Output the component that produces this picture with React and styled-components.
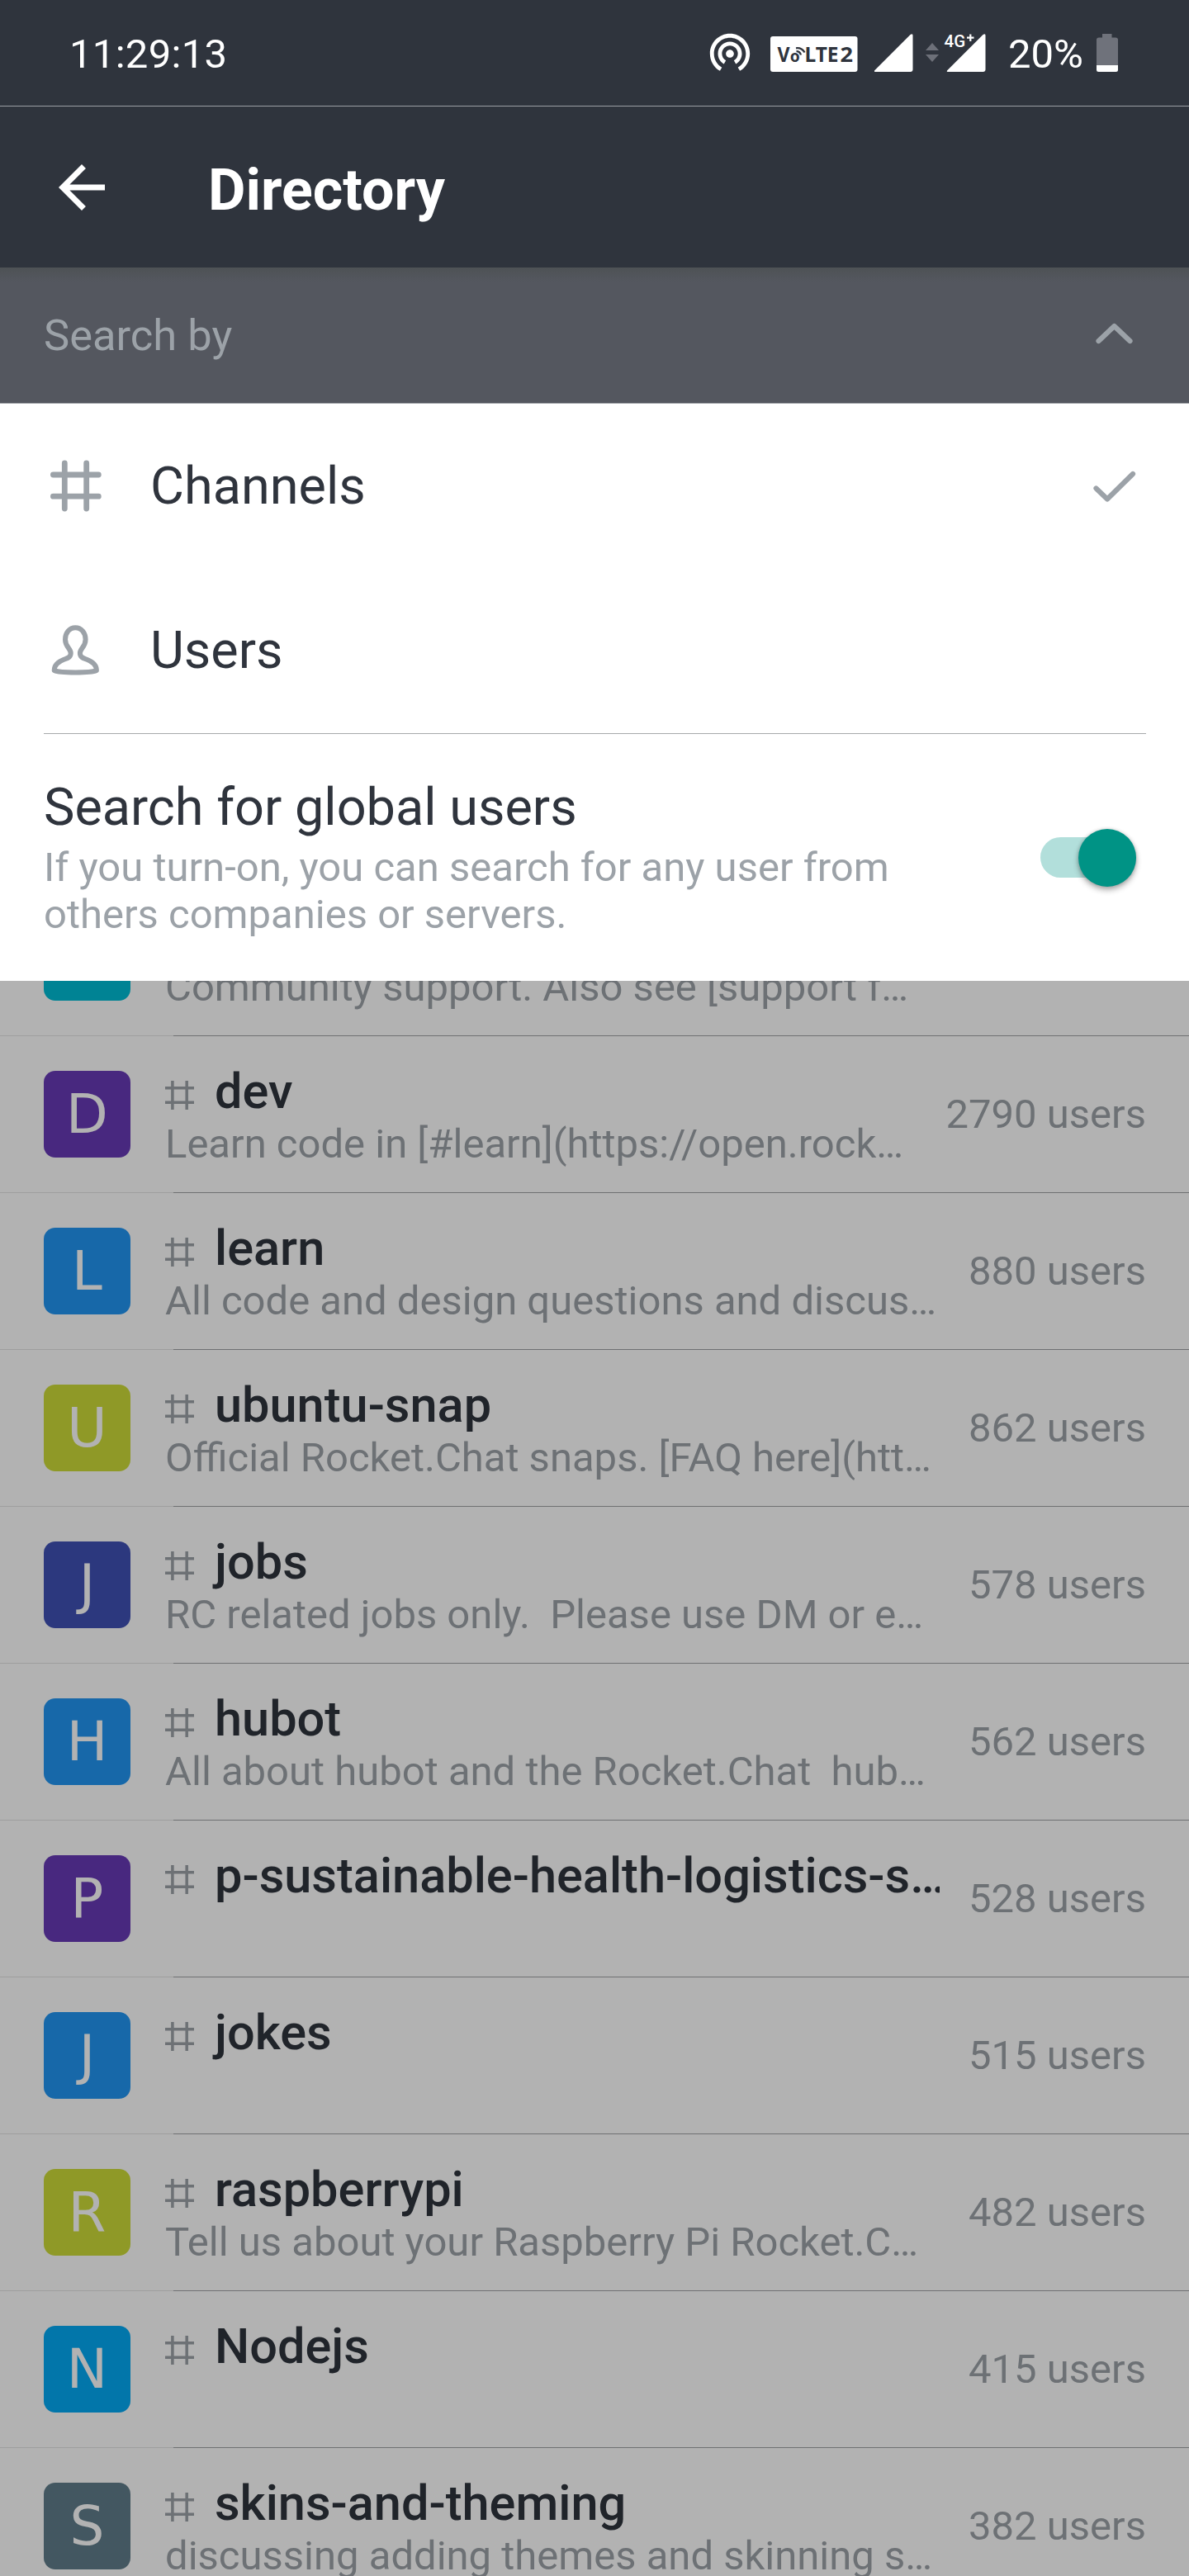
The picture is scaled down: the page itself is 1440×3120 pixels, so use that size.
import React from "react";
import styled, { createGlobalStyle } from "styled-components";

const GlobalStyle = createGlobalStyle`
  * { box-sizing: border-box; }
  body { margin: 0; background: #fff; }
`;

const Screen = styled.div`
  width: 1440px;
  height: 3120px;
  display: flex;
  flex-direction: column;
  overflow: hidden;
  background: #fff;
  font-family: Roboto, "Liberation Sans", sans-serif;
  color: #2f343d;
`;

const StatusBar = styled.div`
  flex: none;
  height: 129px;
  display: flex;
  align-items: center;
  padding: 0 86px 0 84px;
  background: #2f343d;
  border-bottom: 1px solid #9b9ea4;
  color: #fff;
  font-size: 49px;
  line-height: 58px;
`;

const Clock = styled.span`
  flex: 1;
  padding-top: 4px;
  letter-spacing: 0.3px;
`;

const StatusIcons = styled.div`
  display: flex;
  align-items: flex-start;
  height: 58px;
`;

const StatusGlyph = styled.svg`
  display: block;
  flex: none;
  margin-left: ${(p) => p.$gap || 0}px;
`;

const BatteryText = styled.span`
  width: 92px;
  margin: 2px 0 0 27px;
`;

const Header = styled.header`
  flex: none;
  height: 195px;
  display: flex;
  align-items: center;
  padding-left: 57px;
  background: #2f343d;
  color: #fff;
`;

const HeaderTitle = styled.h1`
  margin: 6px 0 0 111px;
  font-size: 70px;
  line-height: 82px;
  font-weight: 700;
`;

const SearchBar = styled.div`
  flex: none;
  height: 165px;
  display: flex;
  align-items: center;
  justify-content: space-between;
  padding: 0 52px 0 53px;
  background: linear-gradient(rgba(78, 82, 85, 1), rgba(84, 87, 95, 0) 17px), #54575f;
  border-bottom: 1px solid #a3a5a9;
  color: #9ca2a8;
  font-size: 52.5px;
  line-height: 62px;
`;

const Dropdown = styled.section`
  flex: none;
  height: 699px;
  background: #fff;
`;

const Option = styled.div`
  height: ${(p) => p.$height}px;
  display: flex;
  align-items: center;
  padding: 0 52px 0 53px;
`;

const OptionLabel = styled.span`
  flex: 1;
  margin-left: 52px;
  font-size: 63px;
  line-height: 74px;
`;

const Divider = styled.div`
  height: 1px;
  margin: 0 52px 0 53px;
  background: #a7a9ab;
`;

const GlobalSearch = styled.div`
  display: flex;
  align-items: center;
  justify-content: space-between;
  height: 299px;
  padding: 0 64px 0 53px;
`;

const GlobalTitle = styled.div`
  font-size: 63px;
  line-height: 74px;
`;

const GlobalHint = styled.div`
  margin-top: 7px;
  font-size: 49px;
  line-height: 57px;
  color: #9ca2a8;
`;

const SwitchTrack = styled.div`
  width: 116px;
  height: 49px;
  display: flex;
  align-items: center;
  justify-content: flex-end;
  border-radius: 25px;
  background: #b2dfdb;
`;

const SwitchThumb = styled.div`
  flex: none;
  width: 70px;
  height: 70px;
  border-radius: 50%;
  background: #009385;
  box-shadow: 0 4px 7px rgba(0, 0, 0, 0.32), 0 0 4px rgba(0, 0, 0, 0.16);
`;

const ListViewport = styled.main`
  flex: 1;
  min-height: 0;
  position: relative;
  overflow: hidden;
  &::after {
    content: "";
    position: absolute;
    inset: 0;
    background: rgba(0, 0, 0, 0.3);
  }
`;

const List = styled.ul`
  margin: -123px 0 0;
  padding: 0;
  list-style: none;
`;

const Row = styled.li`
  height: 190px;
  display: flex;
  align-items: center;
  padding: 0 52px 1px 53px;
  background: linear-gradient(to right, #e3e3e3 210px, #a0a1a4 210px) bottom / 100% 1px no-repeat;
`;

const Avatar = styled.div`
  flex: none;
  width: 105px;
  height: 105px;
  border-radius: 14px;
  background: ${(p) => p.$color};
  color: #fff;
  font-family: "DejaVu Sans", sans-serif;
  font-size: 66px;
  line-height: 106px;
  text-align: center;
`;

const RowText = styled.div`
  flex: 1;
  min-width: 0;
  height: 133px;
  margin: 7px 35px 0 42px;
  overflow: hidden;
  white-space: pre;
`;

const NameLine = styled.div`
  display: flex;
  align-items: center;
  height: 70px;
`;

const HashIcon = styled.svg`
  flex: none;
  margin-top: 9px;
`;

const Name = styled.span`
  margin-left: 25px;
  font-size: 59.5px;
  line-height: 70px;
  font-weight: 500;
`;

const Description = styled.div`
  font-size: 49px;
  line-height: 58px;
  color: #9ca2a8;
`;

const Count = styled.span`
  flex: none;
  font-size: 49px;
  line-height: 58px;
  color: #9ca2a8;
`;

const BadgeText = styled.text`
  font-family: "Noto Sans", "Open Sans", sans-serif;
  font-weight: 700;
  fill: #2f343d;
`;

const NetworkText = styled.text`
  font-family: Roboto, sans-serif;
  font-weight: 500;
  fill: #fff;
`;

const rooms = [
  { id: "support", letter: "", color: "#00bcd4", name: "", text: "Community support. Also see [support f…", users: "" },
  { id: "dev", letter: "D", color: "#673ab7", name: "dev", text: "Learn code in [#learn](https://open.rock…", users: "2790 users" },
  { id: "learn", letter: "L", color: "#2196f3", name: "learn", text: "All code and design questions and discus…", users: "880 users" },
  { id: "ubuntu", letter: "U", color: "#cddc39", name: "ubuntu-snap", text: "Official Rocket.Chat snaps. [FAQ here](htt…", users: "862 users" },
  { id: "jobs", letter: "J", color: "#3f51b5", name: "jobs", text: "RC related jobs only.  Please use DM or e…", users: "578 users" },
  { id: "hubot", letter: "H", color: "#2196f3", name: "hubot", text: "All about hubot and the Rocket.Chat  hub…", users: "562 users" },
  { id: "health", letter: "P", color: "#673ab7", name: "p-sustainable-health-logistics-s…", text: "", users: "528 users" },
  { id: "jokes", letter: "J", color: "#2196f3", name: "jokes", text: "", users: "515 users" },
  { id: "raspberrypi", letter: "R", color: "#cddc39", name: "raspberrypi", text: "Tell us about your Raspberry Pi Rocket.C…", users: "482 users" },
  { id: "nodejs", letter: "N", color: "#03a9f4", name: "Nodejs", text: "", users: "415 users" },
  { id: "skins", letter: "S", color: "#607d8b", name: "skins-and-theming", text: "discussing adding themes and skinning s…", users: "382 users" },
];

const SmallHash = () => (
  <HashIcon width="35" height="35" viewBox="0 0 35 35" fill="none" stroke="#9ca2a8" strokeWidth="3.5">
    <path d="M8.9 0v35M26.2 0v35M0 8.7h35M0 26.3h35" />
  </HashIcon>
);

const Signal = () => <path d="M0 44.5L43.5 1Q46.5-1 46.5 2V43Q46.5 46 43.5 46H1.5Q-1 46 0 44.5Z" fill="#fff" />;

export default function App() {
  return (
    <Screen>
      <GlobalStyle />
      <StatusBar>
        <Clock>11:29:13</Clock>
        <StatusIcons>
          <StatusGlyph width="58" height="58" viewBox="0 0.6 24 24" fill="#fff">
            <path d="M12 11c-1.1 0-2 .9-2 2s.9 2 2 2 2-.9 2-2-.9-2-2-2zm6 2c0-3.31-2.69-6-6-6s-6 2.69-6 6c0 2.22 1.21 4.15 3 5.19l1-1.74c-1.19-.7-2-1.97-2-3.45 0-2.21 1.79-4 4-4s4 1.79 4 4c0 1.48-.81 2.75-2 3.45l1 1.74c1.79-1.04 3-2.97 3-5.19zM12 3C6.48 3 2 7.48 2 13c0 3.7 2.01 6.92 4.99 8.65l1-1.73C5.61 18.53 4 15.96 4 13c0-4.42 3.58-8 8-8s8 3.58 8 8c0 2.96-1.61 5.53-4 6.92l1 1.73c2.99-1.73 5-4.95 5-8.65 0-5.52-4.48-10-10-10z" />
          </StatusGlyph>
          <StatusGlyph $gap={20} width="106" height="58" viewBox="933 35 106 58">
            <rect x="933" y="44" width="105.5" height="43" rx="3" fill="#fff" />
            <BadgeText x="941.5" y="74.7" fontSize="24.4" textLength="15" lengthAdjust="spacingAndGlyphs">V</BadgeText>
            <BadgeText x="956.7" y="74.7" fontSize="19" textLength="12" lengthAdjust="spacingAndGlyphs">o</BadgeText>
            <g fill="none" stroke="#2f343d" strokeWidth="2.3">
              <path d="M964.5 62.2Q968.5 62 970 66.5" />
              <path d="M964 58.3Q971 57.5 974.5 63.5" />
            </g>
            <BadgeText x="974.5" y="74.7" fontSize="24.4" textLength="41" lengthAdjust="spacingAndGlyphs">LTE</BadgeText>
            <BadgeText x="1017.5" y="74.7" fontSize="24.4" textLength="15.5" lengthAdjust="spacingAndGlyphs">2</BadgeText>
          </StatusGlyph>
          <StatusGlyph $gap={19.5} width="47" height="58" viewBox="0 -6 47 58">
            <Signal />
          </StatusGlyph>
          <StatusGlyph $gap={15.5} width="73" height="58" viewBox="1121 35 73 58">
            <path d="M1121 61L1129 52L1137 61ZM1121 66H1137L1129 75Z" fill="#6d7079" />
            <g transform="translate(1147 41)"><Signal /></g>
            <NetworkText x="1143.5" y="57" fontSize="20.5">4G</NetworkText>
            <path d="M1175.3 41.5V50M1171 45.7H1179.5" stroke="#fff" strokeWidth="2.2" />
          </StatusGlyph>
          <BatteryText>20%</BatteryText>
          <StatusGlyph $gap={15} width="26" height="58" viewBox="1328 35 26 58">
            <path d="M1335 41H1346.5V45.5H1351Q1354 45.5 1354 48V79H1328V48Q1328 45.5 1331 45.5H1335Z" fill="#6f727b" />
            <path d="M1328 79H1354V84.5Q1354 87 1351.5 87H1330.5Q1328 87 1328 84.5Z" fill="#fff" />
          </StatusGlyph>
        </StatusIcons>
      </StatusBar>

      <Header>
        <svg width="84" height="84" viewBox="0 0 24 24" fill="#fff">
          <path d="M20 11H7.83l5.59-5.59L12 4l-8 8 8 8 1.41-1.41L7.83 13H20v-2z" />
        </svg>
        <HeaderTitle>Directory</HeaderTitle>
      </Header>

      <SearchBar>
        <span>Search by</span>
        <svg width="77" height="70" viewBox="1311 370 77 70" fill="none" stroke="#9ca2a8" strokeWidth="6.2" strokeLinecap="round" strokeLinejoin="round">
          <path d="M1330.5 412L1349.500 394L1368.500 412" />
        </svg>
      </SearchBar>

      <Dropdown>
        <Option $height={199}>
          <svg width="77" height="77" viewBox="53 550 77 77" fill="none" stroke="#9ca2a8" strokeWidth="6.8" strokeLinecap="round">
            <path d="M78.3 561V616M104.7 561V616M64.4 575H119.3M64.4 601.2H119.3" />
          </svg>
          <OptionLabel>Channels</OptionLabel>
          <svg width="77" height="77" viewBox="1311 550 77 77" fill="none" stroke="#9ca2a8" strokeWidth="6.2" strokeLinecap="round" strokeLinejoin="round">
            <path d="M1327.5 591.5L1341 604.5L1372 574" />
          </svg>
        </Option>
        <Option $height={200}>
          <svg width="77" height="77" viewBox="53 749.5 77 77" fill="none" stroke="#9ca2a8" strokeWidth="6" strokeLinejoin="round">
            <path d="M91.3 759.7C84 759.7 79 766 79 774C79 783 85.7 785 85.7 790.5C85.7 795.5 82 796.5 78 798C70 801 65.7 805 65.7 811.5C73 814.8 109.6 814.8 116.9 811.5C116.9 805 112.6 801 104.6 798C100.6 796.5 96.9 795.5 96.9 790.5C96.9 785 103.6 783 103.6 774C103.6 766 98.6 759.7 91.3 759.7Z" />
          </svg>
          <OptionLabel>Users</OptionLabel>
        </Option>
        <Divider />
        <GlobalSearch>
          <div>
            <GlobalTitle>Search for global users</GlobalTitle>
            <GlobalHint>
              If you turn-on, you can search for any user from
              <br />
              others companies or servers.
            </GlobalHint>
          </div>
          <SwitchTrack>
            <SwitchThumb />
          </SwitchTrack>
        </GlobalSearch>
      </Dropdown>

      <ListViewport>
        <List>
          {rooms.map((room) => (
            <Row key={room.id}>
              <Avatar $color={room.color}>{room.letter}</Avatar>
              <RowText>
                <NameLine>
                  <SmallHash />
                  <Name>{room.name}</Name>
                </NameLine>
                <Description>{room.text}</Description>
              </RowText>
              <Count>{room.users}</Count>
            </Row>
          ))}
        </List>
      </ListViewport>
    </Screen>
  );
}
